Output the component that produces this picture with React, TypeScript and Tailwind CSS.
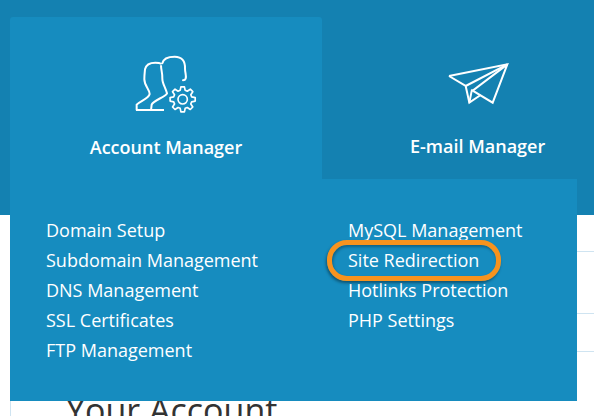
import React from 'react';

const leftLinks = ['Domain Setup', 'Subdomain Management', 'DNS Management', 'SSL Certificates', 'FTP Management'];
const rightLinks = ['MySQL Management', 'Site Redirection', 'Hotlinks Protection', 'PHP Settings'];

// 8 tooth gear outline
function gearPath(cx: number, cy: number, outer: number, inner: number) {
  const pts: string[] = [];
  for (let i = 0; i < 8; i++) {
    const a = (i * Math.PI) / 4 - Math.PI / 2;
    const offs: [number, number][] = [[-0.27, inner], [-0.14, outer], [0.14, outer], [0.27, inner]];
    offs.forEach(([o, r]) => {
      pts.push(`${(cx + r * Math.cos(a + o)).toFixed(1)} ${(cy + r * Math.sin(a + o)).toFixed(1)}`);
    });
  }
  return 'M' + pts.join(' L') + ' Z';
}

function AccountIcon() {
  return (
    <svg width="130" height="100" viewBox="0 0 390 300" fill="none" stroke="white" strokeWidth="6" className="block">
      {/* front person */}
      <path d="M110 241 L110 224 C122 212 146 206 149 192 C149 178 133 168 133 148 C133 136 134 128 135 118 C138 104 152 98 166 98 C174 98 180 99 185 102" />
      <path d="M183 106 C183 120 188 130 187 146 C187 160 196 172 201 190 C196 202 160 210 155 224 L153 241" />
      <path d="M108 240 L192 240" />
      {/* back person */}
      <path d="M187 100 C190 86 204 80 224 80 C246 80 256 94 255 116 C255 128 260 138 257 146 C256 149 253 151 249 151" strokeLinecap="round" />
      {/* gear */}
      <path d={gearPath(248, 208, 38, 28)} strokeWidth="5" strokeLinejoin="round" />
      <circle cx="248" cy="208" r="14" strokeWidth="5" />
    </svg>
  );
}

function PlaneIcon() {
  return (
    <svg width="120" height="90" viewBox="0 0 360 270" fill="none" stroke="white" strokeWidth="6" strokeLinejoin="miter" className="block">
      <path d="M87 108 L262 73 L218 188 L158 152 L262 73" />
      <path d="M87 108 L137 138 L148 188 L182 165" />
      <path d="M137 138 L262 73" />
      <path d="M148 188 L156 148" />
    </svg>
  );
}

export default function App() {
  return (
    <div className="relative w-[594px] h-[416px] overflow-hidden bg-white font-['Open_Sans',sans-serif]">
      {/* header band */}
      <div className="h-[215px] bg-[#1481b1]" />

      {/* page behind the menu */}
      <div className="relative h-[201px]">
        <div className="absolute right-0 top-[36px] w-[17px] border-t border-[#cfe4f1]" />
        <div className="absolute right-0 top-[98px] w-[17px] border-t border-[#cfe4f1]" />
        <div className="absolute right-0 top-[136px] w-[17px] border-t border-[#cfe4f1]" />
        <div className="absolute left-[10px] top-[186px] h-[15px] border-l border-[#cfe4f1]" />
        <h1 className="pl-[66px] pt-[172px] text-[34px] leading-[46px] text-[#333] whitespace-nowrap">Your Account</h1>
      </div>

      {/* dropdown menu */}
      <div className="absolute left-[10px] top-[17px] w-[567px]">
        <div className="flex h-[162px]">
          <div className="w-[312px] rounded-t-[3px] bg-[#168cbf] flex flex-col items-center pt-[13px]">
            <div className="-ml-[2px]"><AccountIcon /></div>
            <div className="mt-[5px] text-[18px] leading-[24px] font-semibold text-white whitespace-nowrap">Account Manager</div>
          </div>
          <div className="pl-[98px] pt-[23px] flex flex-col">
            <PlaneIcon />
            <div className="-ml-[10px] mt-[4px] text-[18px] leading-[24px] font-semibold text-white whitespace-nowrap">E-mail Manager</div>
          </div>
        </div>
        <div className="h-[222px] bg-[#168cbf] grid grid-cols-[302px_1fr] pl-[36px] pt-[36px] text-[18px] leading-[30px] text-white">
          <ul>
            {leftLinks.map((l) => (
              <li key={l} className="whitespace-nowrap">{l}</li>
            ))}
          </ul>
          <ul>
            {rightLinks.map((l) => (
              <li key={l} className="whitespace-nowrap">{l}</li>
            ))}
          </ul>
        </div>
      </div>

      {/* highlight around Site Redirection */}
      <div className="absolute left-[327px] top-[240px] w-[174px] h-[41px] rounded-[20px] border-[5px] border-[#f7931e] shadow-[-1px_2px_3px_rgba(0,0,0,0.4),inset_1px_2px_3px_rgba(0,0,0,0.3)]" />
    </div>
  );
}
